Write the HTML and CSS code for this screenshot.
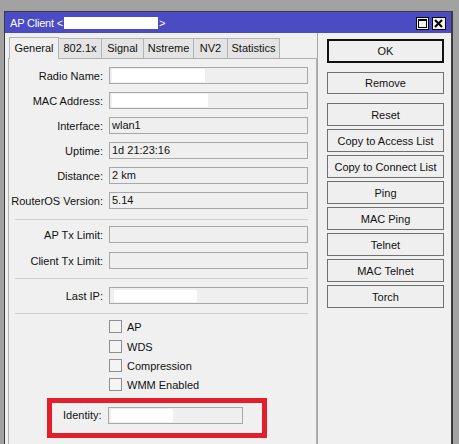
FILE: index.html
```html
<!DOCTYPE html>
<html>
<head>
<meta charset="utf-8">
<link rel="stylesheet" href="styles.css">
</head>
<body>
<div class="window">
  <div class="titlebar">
    <span class="title">AP Client &lt;<span class="redact title-redact"></span>&gt;</span>
    <div class="wbtns">
      <span class="wbtn"><svg width="11" height="11" viewBox="0 0 11 11"><rect x="1.5" y="1.5" width="8" height="8" fill="none" stroke="#000" stroke-width="1"/><rect x="1" y="1" width="9" height="2" fill="#000"/></svg></span>
      <span class="wbtn"><svg width="11" height="11" viewBox="0 0 11 11"><path d="M2 2 L9 9 M9 2 L2 9" stroke="#000" stroke-width="2"/></svg></span>
    </div>
  </div>
  <div class="content">
    <div class="left">
      <div class="tabs">
        <span class="tab active t-general">General</span>
        <span class="tab t-8021x">802.1x</span>
        <span class="tab t-signal">Signal</span>
        <span class="tab t-nstreme">Nstreme</span>
        <span class="tab t-nv2">NV2</span>
        <span class="tab t-stats">Statistics</span>
      </div>
      <div class="panel">
        <div class="row r-first"><span class="label">Radio Name:</span><span class="field"><span class="redact f-redact1"></span></span></div>
        <div class="row"><span class="label">MAC Address:</span><span class="field"><span class="redact f-redact2"></span></span></div>
        <div class="row"><span class="label">Interface:</span><span class="field">wlan1</span></div>
        <div class="row"><span class="label">Uptime:</span><span class="field">1d 21:23:16</span></div>
        <div class="row"><span class="label">Distance:</span><span class="field">2 km</span></div>
        <div class="row"><span class="label">RouterOS Version:</span><span class="field">5.14</span></div>
        <div class="sep sep1"></div>
        <div class="row r-ap"><span class="label">AP Tx Limit:</span><span class="field"></span></div>
        <div class="row r-client"><span class="label">Client Tx Limit:</span><span class="field"></span></div>
        <div class="sep sep2"></div>
        <div class="row r-ip"><span class="label">Last IP:</span><span class="field"><span class="redact f-redact3"></span></span></div>
        <div class="sep sep3"></div>
        <div class="check c-first"><span class="box"></span>AP</div>
        <div class="check c-wds"><span class="box"></span>WDS</div>
        <div class="check"><span class="box"></span>Compression</div>
        <div class="check"><span class="box"></span>WMM Enabled</div>
        <div class="highlight">
          <span class="id-label">Identity:</span><span class="field id-field"><span class="redact f-redact4"></span></span>
        </div>
      </div>
    </div>
    <div class="right">
      <div class="btn default">OK</div>
      <div class="btn b-remove">Remove</div>
      <div class="btn b-reset">Reset</div>
      <div class="btn">Copy to Access List</div>
      <div class="btn">Copy to Connect List</div>
      <div class="btn">Ping</div>
      <div class="btn">MAC Ping</div>
      <div class="btn">Telnet</div>
      <div class="btn">MAC Telnet</div>
      <div class="btn">Torch</div>
    </div>
  </div>
</div>
</body>
</html>
```
FILE: styles.css
```css
html, body {
  margin: 0;
  padding: 0;
  overflow: hidden;
}
body {
  background: #a2a2a2;
  font-family: "Liberation Sans", Arial, sans-serif;
  font-size: 11px;
  color: #111;
  width: 459px;
  height: 444px;
}
.window {
  margin: 11px 0 0 4px;
  width: 446px;
  height: 440px;
  border: 1px solid #3a3a3a;
  border-right-width: 2px;
  border-bottom: none;
  background: #f0f0f0;
  display: flex;
  flex-direction: column;
}
.titlebar {
  height: 21px;
  background: #4b4bc4;
  display: flex;
  align-items: center;
  justify-content: space-between;
  padding: 0 5px 0 5px;
  flex: none;
}
.title {
  color: #fff;
  font-size: 11px;
  letter-spacing: -0.2px;
  display: flex;
  align-items: center;
  white-space: nowrap;
}
.redact {
  display: inline-block;
  background: #fff;
}
.title-redact {
  width: 94px;
  height: 12px;
  margin: 0 1px 0 1px;
}
.wbtns {
  display: flex;
  gap: 3px;
  align-self: flex-start;
  margin-top: 5px;
}
.wbtn {
  width: 11px;
  height: 11px;
  border: 1px solid #000;
  background: #f2f2f2;
  display: flex;
}
.wbtn:last-child {
  width: 12px;
}
.content {
  flex: 1;
  display: flex;
}
.left {
  width: 309px;
  padding-left: 3px;
  display: flex;
  flex-direction: column;
}
.tabs {
  display: flex;
  align-items: flex-end;
  margin-top: 3px;
  height: 22px;
  padding-left: 1px;
}
.tab {
  box-sizing: border-box;
  height: 20px;
  line-height: 19px;
  text-align: center;
  border: 1px solid #b4b4b4;
  border-bottom: none;
  border-left: none;
  background: #e4e4e4;
  white-space: nowrap;
}
.tab.active {
  height: 22px;
  line-height: 21px;
  background: #f0f0f0;
  border-left: 1px solid #b4b4b4;
  margin-bottom: -1px;
  position: relative;
  z-index: 1;
}
.t-general { width: 50px; }
.t-8021x { width: 43px; }
.t-signal { width: 42px; }
.t-nstreme { width: 50px; }
.t-nv2 { width: 34px; }
.t-stats { width: 52px; }
.panel {
  flex: 1;
  border: 1px solid #b0b0b0;
  border-bottom: none;
  display: flex;
  flex-direction: column;
}
.row {
  display: flex;
  align-items: center;
  gap: 6px;
  height: 17px;
  margin-top: 8px;
}
.label {
  width: 94px;
  text-align: right;
  white-space: nowrap;
}
.field {
  box-sizing: border-box;
  width: 199px;
  height: 17px;
  line-height: 15px;
  border: 1px solid #a8a8a8;
  background: #efefef;
  padding-left: 2px;
  display: flex;
  align-items: center;
}
.f-redact1 { width: 93px; height: 13px; }
.f-redact2 { width: 96px; height: 13px; }
.f-redact3 { width: 83px; height: 12px; margin-left: 2px; }
.f-redact4 { width: 62px; height: 13px; }
.sep {
  height: 1px;
  background: #cfcfcf;
  margin-left: 6px;
  width: 293px;
}
.sep1 { margin-top: 10px; }
.r-ap { margin-top: 6px; }
.r-client { margin-top: 9px; }
.sep2 { margin-top: 9px; }
.r-ip { margin-top: 8px; }
.sep3 { margin-top: 9px; }
.check {
  display: flex;
  align-items: center;
  gap: 5px;
  height: 13px;
  margin-left: 100px;
  margin-top: 6px;
}
.c-wds { margin-top: 7px; }
.box {
  box-sizing: border-box;
  width: 13px;
  height: 13px;
  border: 1px solid #8e8e8e;
  background: #f4f4f4;
}
.highlight {
  box-sizing: border-box;
  margin: 7px 0 0 38px;
  width: 220px;
  height: 40px;
  border: 5px solid #e21f2a;
  display: flex;
  align-items: flex-start;
  padding: 4px 0 0 11px;
  gap: 6px;
}
.id-label {
  line-height: 17px;
}
.id-field {
  width: 135px;
}
.right {
  flex: 1;
  border-left: 1px solid #a8a8a8;
  padding-left: 9px;
  display: flex;
  flex-direction: column;
}
.btn {
  box-sizing: border-box;
  width: 117px;
  height: 23px;
  border: 1px solid #707070;
  background: #efefef;
  display: flex;
  align-items: center;
  justify-content: center;
  margin-top: 3px;
  white-space: nowrap;
}
.btn.default {
  margin-top: 6px;
  height: 24px;
  border: 2px solid #111;
}
.b-remove {
  margin-top: 9px;
  height: 22px;
}
.b-reset {
  margin-top: 9px;
}
```
